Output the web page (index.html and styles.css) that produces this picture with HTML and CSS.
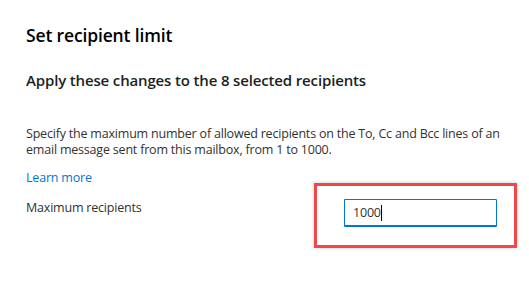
FILE: index.html
```html
<!DOCTYPE html>
<html lang="en">
<head>
<meta charset="utf-8">
<title>Set recipient limit</title>
<link rel="stylesheet" href="styles.css">
</head>
<body>
<div class="panel">
  <h1 class="title">Set recipient limit</h1>
  <h2 class="subtitle">Apply these changes to the 8 selected recipients</h2>
  <p class="desc">Specify the maximum number of allowed recipients on the To, Cc and Bcc lines of an email message sent from this mailbox, from 1 to 1000.</p>
  <a class="link" href="#">Learn more</a>
  <div class="row">
    <label class="label" for="max">Maximum recipients</label>
    <div class="field">
      <div class="input"><span class="value">1000</span><span class="caret"></span></div>
      <div class="highlight"></div>
    </div>
  </div>
</div>
</body>
</html>
```
FILE: styles.css
```css
html, body {
  margin: 0;
  padding: 0;
  background: #ffffff;
}
body {
  font-family: "Open Sans", "Noto Sans", sans-serif;
  color: #323130;
  width: 529px;
  height: 285px;
  overflow: hidden;
}
.panel {
  padding: 23px 0 0 26px;
}
.title {
  margin: 0;
  font-size: 17.5px;
  letter-spacing: -0.15px;
  line-height: 24px;
  font-weight: 600;
  color: #000000;
}
.subtitle {
  margin: 23px 0 0 0;
  font-size: 15px;
  letter-spacing: -0.15px;
  line-height: 20px;
  font-weight: 600;
  color: #201f1e;
}
.desc {
  margin: 36px 0 0 0;
  width: 478px;
  font-size: 12.5px;
  letter-spacing: -0.2px;
  line-height: 16px;
  color: #323130;
}
.link {
  display: block;
  margin-top: 12px;
  font-size: 12.5px;
  letter-spacing: -0.2px;
  line-height: 16px;
  color: #0078d4;
  text-decoration: none;
}
.row {
  display: flex;
  align-items: flex-start;
  margin-top: 13px;
}
.label {
  width: 318px;
  flex: none;
  padding-top: 1px;
  font-size: 12.5px;
  letter-spacing: -0.2px;
  line-height: 16px;
  color: #323130;
}
.field {
  position: relative;
}
.input {
  box-sizing: border-box;
  width: 153px;
  height: 28px;
  border: 1px solid #0078d4;
  border-bottom-width: 2px;
  border-radius: 1px;
  display: flex;
  align-items: center;
  padding-left: 8px;
  font-size: 12.5px;
  letter-spacing: -0.2px;
  color: #323130;
}
.caret {
  display: inline-block;
  width: 1px;
  height: 16px;
  background: #000000;
}
.highlight {
  position: absolute;
  left: -30px;
  top: -16px;
  width: 203px;
  height: 65px;
  box-sizing: border-box;
  border: 3px solid #f0474a;
  box-shadow: 0 0 3px rgba(0, 0, 0, 0.25);
}
```
